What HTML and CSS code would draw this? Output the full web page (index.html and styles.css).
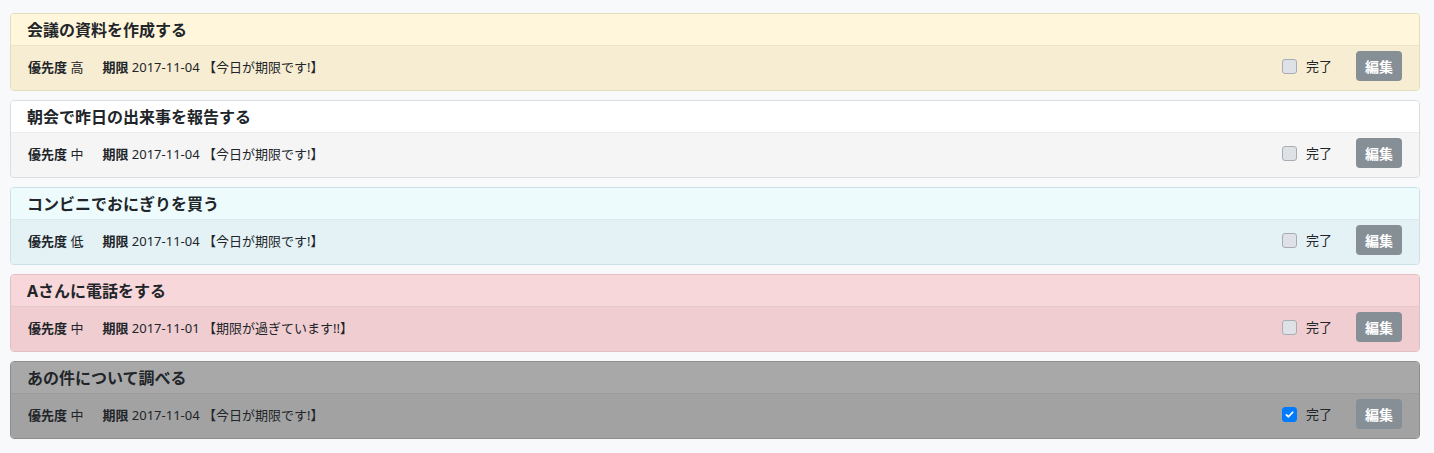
FILE: index.html
```html
<!DOCTYPE html>
<html lang="ja">
<head>
<meta charset="utf-8">
<link rel="stylesheet" href="styles.css">
</head>
<body>
<div class="list">
  <div class="card warn">
    <div class="card-header">会議の資料を作成する</div>
    <div class="card-body">
      <div class="meta"><b>優先度</b> 高<span class="sp"></span><b>期限</b> 2017-11-04 【今日が期限です!】</div>
      <div class="actions">
        <label class="check"><span class="box"></span>完了</label>
        <button class="btn">編集</button>
      </div>
    </div>
  </div>
  <div class="card plain">
    <div class="card-header">朝会で昨日の出来事を報告する</div>
    <div class="card-body">
      <div class="meta"><b>優先度</b> 中<span class="sp"></span><b>期限</b> 2017-11-04 【今日が期限です!】</div>
      <div class="actions">
        <label class="check"><span class="box"></span>完了</label>
        <button class="btn">編集</button>
      </div>
    </div>
  </div>
  <div class="card info">
    <div class="card-header">コンビニでおにぎりを買う</div>
    <div class="card-body">
      <div class="meta"><b>優先度</b> 低<span class="sp"></span><b>期限</b> 2017-11-04 【今日が期限です!】</div>
      <div class="actions">
        <label class="check"><span class="box"></span>完了</label>
        <button class="btn">編集</button>
      </div>
    </div>
  </div>
  <div class="card danger">
    <div class="card-header">Aさんに電話をする</div>
    <div class="card-body">
      <div class="meta"><b>優先度</b> 中<span class="sp"></span><b>期限</b> 2017-11-01 【期限が過ぎています!!】</div>
      <div class="actions">
        <label class="check"><span class="box"></span>完了</label>
        <button class="btn">編集</button>
      </div>
    </div>
  </div>
  <div class="card done">
    <div class="card-header">あの件について調べる</div>
    <div class="card-body">
      <div class="meta"><b>優先度</b> 中<span class="sp"></span><b>期限</b> 2017-11-04 【今日が期限です!】</div>
      <div class="actions">
        <label class="check"><span class="box checked"><svg viewBox="0 0 8 8" width="9" height="9"><path d="M1.2 4.3 L3.1 6 L6.8 2" fill="none" stroke="#fff" stroke-width="1.6" stroke-linecap="round" stroke-linejoin="round"/></svg></span>完了</label>
        <button class="btn">編集</button>
      </div>
    </div>
  </div>
</div>
</body>
</html>
```

FILE: styles.css
```css
html, body {
  margin: 0;
  padding: 0;
}
body {
  background: #f8f9fa;
  font-family: "Noto Sans", "Noto Sans CJK JP", sans-serif;
  color: #212529;
}
.list {
  padding: 13px 14px 0 10px;
  display: flex;
  flex-direction: column;
  gap: 9px;
}
.card {
  border: 1px solid #ddd;
  border-radius: 4px;
  overflow: hidden;
  height: 78px;
  box-sizing: border-box;
  display: flex;
  flex-direction: column;
}
.card-header {
  height: 32px;
  box-sizing: border-box;
  padding: 0 16px;
  font-size: 16px;
  font-weight: 700;
  line-height: 32px;
  border-bottom: 1px solid rgba(0,0,0,0.07);
}
.card-body {
  flex: 1;
  display: flex;
  align-items: center;
  justify-content: space-between;
  padding: 0 17px 4px 17px;
}
.meta {
  font-size: 13px;
  line-height: 16px;
  padding-top: 1px;
}
.meta b {
  font-weight: 700;
}
.sp {
  display: inline-block;
  width: 19px;
}
.actions {
  display: flex;
  align-items: center;
}
.check {
  display: flex;
  align-items: center;
  gap: 9px;
  font-size: 13px;
  line-height: 16px;
  margin-right: 24px;
}
.box {
  width: 15px;
  height: 15px;
  box-sizing: border-box;
  border: 1px solid #a7adb3;
  border-radius: 3px;
  background: #dee2e6;
  display: flex;
  align-items: center;
  justify-content: center;
  margin-top: 1px;
}
.box.checked {
  background: #007bff;
  border-color: #007bff;
}
.btn {
  width: 46px;
  height: 30px;
  padding: 0;
  border: none;
  border-radius: 4px;
  background: #868e96;
  color: #fff;
  font-family: "Noto Sans CJK JP", sans-serif;
  font-size: 14px;
  font-weight: 700;
}
.warn { border-color: #e6dbbd; }
.warn .card-header { background: #fff6db; }
.warn .card-body { background: #f7edd2; }
.plain { border-color: #dcdcdc; }
.plain .card-header { background: #fff; }
.plain .card-body { background: #f5f5f5; }
.info { border-color: #cbe1e6; }
.info .card-header { background: #eefbfd; }
.info .card-body { background: #e4f2f5; }
.danger { border-color: #e2bfc3; }
.danger .card-header { background: #f8d7da; }
.danger .card-body { background: #f0cdd1; }
.done { border-color: #8e8e8e; }
.done .card-header { background: #a8a8a8; }
.done .card-body { background: #a2a2a2; }
```
